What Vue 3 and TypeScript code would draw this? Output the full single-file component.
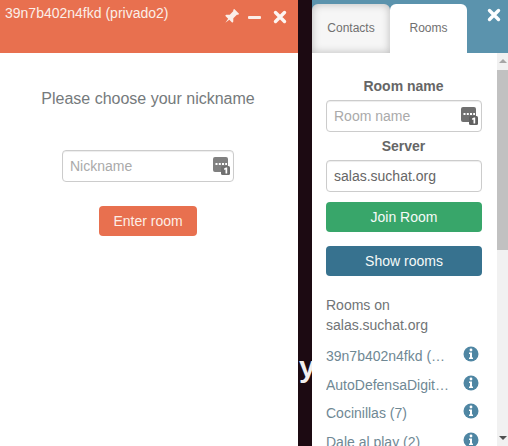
<template>
  <div class="screen">
    <section class="chat">
      <header class="chat-head">
        <span class="chat-title">39n7b402n4fkd (privado2)</span>
        <div class="head-icons">
          <svg width="16" height="16" viewBox="0 0 16 16" class="pin">
            <path transform="rotate(45 8 8)" d="M4.500 0h7v1.800h-1v5.400L13 9.800v1.400H8.800L8 16l-.8-4.800H3V9.800l2.500-2.600V1.800h-1z" fill="#fbeee8" />
          </svg>
          <span class="minus"></span>
          <svg width="14" height="14" viewBox="0 0 14 14" class="close">
            <path d="M2.500 2.500l9 9M11.500 2.500l-9 9" stroke="#fdf5f1" stroke-width="3.400" stroke-linecap="round" />
          </svg>
        </div>
      </header>
      <div class="chat-body">
        <h2 class="prompt">Please choose your nickname</h2>
        <div class="field nick">
          <span class="placeholder">Nickname</span>
          <svg class="field-icon" width="17" height="18" viewBox="0 0 17 18">
            <path d="M0 2Q0 0 2 0h11q2 0 2 2v8H9v5H2q-2 0-2-2z" fill="#808080" />
            <path d="M2.500 6h2v2h-2zM5.800 6h2v2h-2zM9 6h2v2H9zM12.200 6h1.800v2h-1.800z" fill="#fff" />
            <rect x="8" y="9" width="9" height="9" rx="1.500" fill="#707070" />
            <path d="M11 11.500l2-1h1.200v6h-1.700v-4l-1.100.5z" fill="#fff" />
          </svg>
        </div>
        <button class="btn enter">Enter room</button>
      </div>
    </section>

    <div class="gap"><span class="bg-letter">y</span></div>

    <aside class="side">
      <header class="side-head">
        <div class="tab inactive">Contacts</div>
        <div class="tab active">Rooms</div>
        <svg width="14" height="14" viewBox="0 0 14 14" class="side-close">
          <path d="M2.500 2.500l9 9M11.500 2.500l-9 9" stroke="#fdfeff" stroke-width="3.400" stroke-linecap="round" />
        </svg>
      </header>
      <div class="side-main">
        <div class="side-body">
          <label class="label first">Room name</label>
          <div class="field">
            <span class="placeholder">Room name</span>
            <svg class="field-icon" width="17" height="18" viewBox="0 0 17 18">
              <path d="M0 2Q0 0 2 0h11q2 0 2 2v8H9v5H2q-2 0-2-2z" fill="#707070" />
              <path d="M2.500 6h2v2h-2zM5.800 6h2v2h-2zM9 6h2v2H9zM12.200 6h1.800v2h-1.800z" fill="#fff" />
              <rect x="8" y="9" width="9" height="9" rx="1.500" fill="#606060" />
              <path d="M11 11.500l2-1h1.200v6h-1.700v-4l-1.100.5z" fill="#fff" />
            </svg>
          </div>
          <label class="label">Server</label>
          <div class="field"><span class="value">salas.suchat.org</span></div>
          <button class="btn join">Join Room</button>
          <button class="btn show">Show rooms</button>
          <p class="rooms-on">Rooms on<br />salas.suchat.org</p>
          <ul class="rooms">
            <li v-for="room in rooms" :key="room" class="room">
              <span class="room-name">{{ room }}</span>
              <svg class="info" width="16" height="16" viewBox="0 0 16 16">
                <circle cx="8" cy="8" r="7.500" fill="#4f86a3" />
                <circle cx="8" cy="4" r="1.400" fill="#fff" />
                <path d="M6 6.500h3v5h1V13H6v-1.500h1V8H6z" fill="#fff" />
              </svg>
            </li>
          </ul>
        </div>
        <div class="scrollbar">
          <span class="arrow up"></span>
          <div class="thumb"></div>
          <div class="track"></div>
          <span class="arrow down"></span>
        </div>
      </div>
    </aside>
  </div>
</template>

<script setup lang="ts">
const rooms: string[] = [
  '39n7b402n4fkd (12)',
  'AutoDefensaDigital (12)',
  'Cocinillas (7)',
  'Dale al play (2)'
]
</script>

<style>
html,
body {
  margin: 0;
  overflow: hidden;
}
</style>

<style scoped>
.screen {
  width: 508px;
  height: 446px;
  display: flex;
  overflow: hidden;
  background: #1c0a12;
  font-family: "Liberation Sans", Arial, sans-serif;
  font-size: 14px;
  color: #666;
}

.chat {
  width: 298px;
  flex: none;
  background: #fff;
}

.chat-head {
  height: 53px;
  background: #e8704f;
  display: flex;
  justify-content: space-between;
  box-sizing: border-box;
  padding: 5px 11px 0 5px;
  color: #fbeee8;
}

.chat-title {
  line-height: 16px;
}

.head-icons {
  display: flex;
  align-items: center;
  gap: 9px;
  height: 24px;
}

.minus {
  width: 13px;
  height: 3px;
  background: #fbeee8;
  border-radius: 1px;
}

.close {
  margin-left: 3px;
}

.chat-body {
  display: flex;
  flex-direction: column;
  align-items: center;
  padding-right: 2px;
}

.prompt {
  margin: 37px 0 0 0;
  font-size: 16px;
  font-weight: 400;
  line-height: 18px;
  color: #757a7c;
}

.field {
  box-sizing: border-box;
  width: 156px;
  height: 32px;
  border: 1px solid #ccc;
  border-radius: 4px;
  background: #fff;
  display: flex;
  align-items: center;
  justify-content: space-between;
  padding: 0 3px 0 7px;
  box-shadow: inset 0 1px 1px rgba(0, 0, 0, 0.075);
}

.nick {
  width: 172px;
  margin-top: 42px;
}

.placeholder {
  color: #aaa;
}

.value {
  color: #666;
}

.field-icon {
  flex: none;
}

.btn {
  display: block;
  border: none;
  border-radius: 4px;
  font: inherit;
  padding: 0;
  color: #f5faf8;
  text-align: center;
}

.enter {
  width: 98px;
  height: 30px;
  margin-top: 24px;
  background: #e8704f;
  color: #fdeee6;
}

.gap {
  width: 14px;
  flex: none;
  position: relative;
  overflow: hidden;
}

.bg-letter {
  position: absolute;
  left: 1px;
  top: 350px;
  font-size: 30px;
  line-height: 34px;
  font-weight: 700;
  color: #f2f0f0;
}

.side {
  flex: 1;
  min-width: 0;
  display: flex;
  flex-direction: column;
  background: #fff;
}

.side-head {
  height: 53px;
  flex: none;
  background: #5b93ad;
  display: flex;
  align-items: flex-end;
  position: relative;
}

.tab {
  height: 49px;
  box-sizing: border-box;
  text-align: center;
  padding-top: 16px;
  line-height: 16px;
  font-size: 12px;
  border-radius: 6px 6px 0 0;
}

.inactive {
  width: 78px;
  background: #f6f6f6;
  box-shadow: inset 0 0 8px rgba(0, 0, 0, 0.25);
  color: #707070;
}

.active {
  width: 77px;
  background: #fff;
  color: #707070;
}

.side-close {
  position: absolute;
  right: 7px;
  top: 8px;
}

.side-main {
  flex: 1;
  min-height: 0;
  display: flex;
}

.side-body {
  flex: 1;
  min-width: 0;
  padding: 0 16px 0 14px;
  overflow: hidden;
}

.label {
  display: block;
  height: 28px;
  line-height: 20px;
  font-weight: 700;
  text-align: center;
  padding-top: 4px;
  box-sizing: border-box;
}

.first {
  margin-top: 19px;
}

.join {
  width: 156px;
  height: 30px;
  margin-top: 10px;
  background: #38a66a;
}

.show {
  width: 156px;
  height: 30px;
  margin-top: 14px;
  background: #37728f;
}

.rooms-on {
  margin: 19px 0 0 0;
  line-height: 20px;
  color: #707476;
}

.rooms {
  list-style: none;
  margin: 11px 0 0 0;
  padding: 0;
}

.room {
  height: 28.500px;
  display: flex;
  justify-content: space-between;
  align-items: flex-start;
  line-height: 20px;
  color: #6f8894;
}

.room-name {
  width: 123px;
  overflow: hidden;
  white-space: nowrap;
  text-overflow: ellipsis;
}

.info {
  margin: 0 2px 0 0;
}

.scrollbar {
  width: 11px;
  flex: none;
  display: flex;
  flex-direction: column;
  align-items: center;
  background: #f1f1f1;
}

.arrow {
  width: 0;
  height: 0;
  flex: none;
  border-left: 4px solid transparent;
  border-right: 4px solid transparent;
}

.up {
  border-bottom: 4px solid #a6a6a6;
  margin: 6px 0 7px;
}

.down {
  border-top: 4px solid #505050;
  margin: 6px 0;
}

.thumb {
  width: 100%;
  height: 180px;
  flex: none;
  background: #c1c1c1;
}

.track {
  flex: 1;
}
</style>
